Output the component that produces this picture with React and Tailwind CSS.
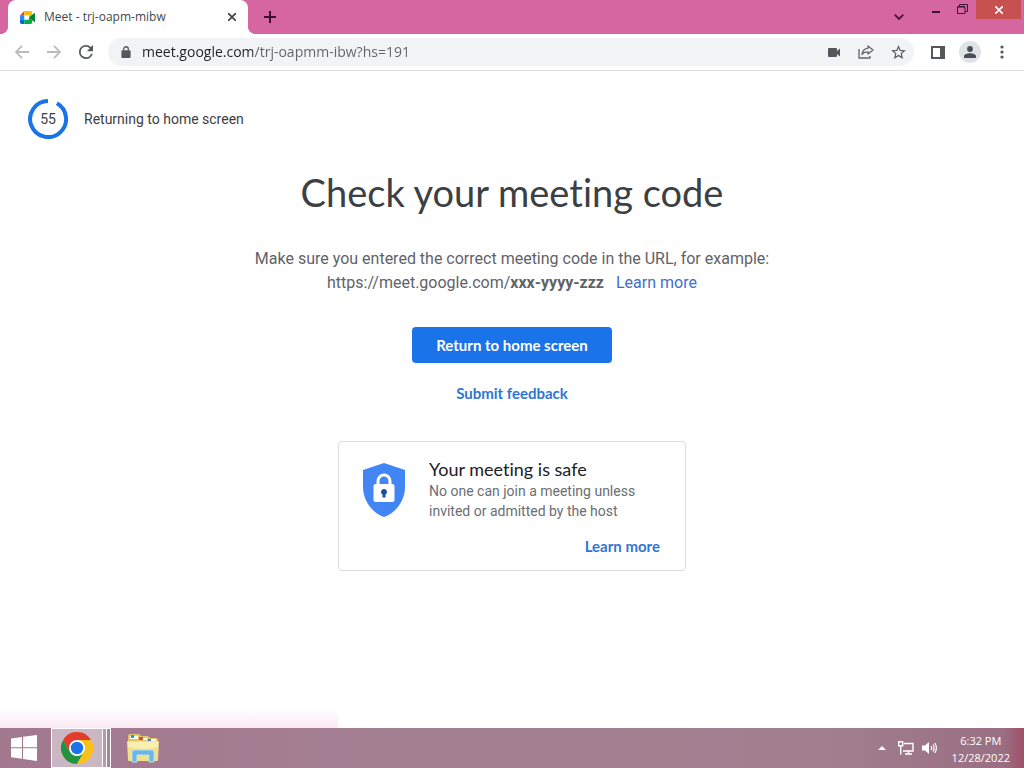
function MeetLogo() {
  return (
    <svg viewBox="0 0 16 14" className="h-[13px] w-[15px]" aria-hidden="true">
      <path d="M0 4.5 4.5 0v4.5z" fill="#ea4335" />
      <path d="M4.500 0H11.500Q13 0 13 1.500V4L9.500 7V4.500H4.500z" fill="#fbbc04" />
      <path d="M0 4.500H4.500V9.500H0z" fill="#2684fc" />
      <path d="M0 9.500H4.500V14H1.500Q0 14 0 12.500z" fill="#0066da" />
      <path d="M4.500 9.500H9.500V7L13 10V12.500Q13 14 11.500 14H4.500z" fill="#00ac47" />
      <path d="M9.500 7 15 2.300Q16 1.700 16 2.800V11.200Q16 12.300 15 11.700z" fill="#00832d" />
    </svg>
  );
}

function IconButton({ label, children, className = "" }) {
  return (
    <button type="button" aria-label={label} className={`flex h-7 w-8 shrink-0 items-center justify-center ${className}`}>
      {children}
    </button>
  );
}

function TabStrip() {
  return (
    <header className="flex h-[34px] bg-[#d5669f]">
      <span className="h-2 w-2 self-end bg-[radial-gradient(circle_at_0_0,transparent_8px,#fff_8px)]" />
      <div className="flex w-60 items-center rounded-t-lg bg-white pr-2 pl-3">
        <MeetLogo />
        <span className="ml-[9px] flex-1 font-['Open_Sans',sans-serif] text-xs text-[#45494d]">Meet - trj-oapm-mibw</span>
        <button type="button" aria-label="Close tab" className="flex h-4 w-4 items-center justify-center">
          <svg viewBox="0 0 8 8" className="h-2 w-2" stroke="#3c4043" strokeWidth="1.600"><path d="M0 0 8 8M8 0 0 8" /></svg>
        </button>
      </div>
      <span className="h-2 w-2 self-end bg-[radial-gradient(circle_at_100%_0,transparent_8px,#fff_8px)]" />
      <button type="button" aria-label="New tab" className="flex h-full w-7 items-center justify-center">
        <svg viewBox="0 0 12 12" className="h-3 w-3" stroke="#3b0f2d" strokeWidth="2"><path d="M6 0V12M0 6H12" /></svg>
      </button>
      <div className="ml-auto flex items-start">
        <button type="button" aria-label="Search tabs" className="flex h-[34px] w-7 items-center justify-center">
          <svg viewBox="0 0 10 6" className="h-[6px] w-[10px]" fill="none" stroke="#4c1038" strokeWidth="1.800"><path d="M.7.7 5 5 9.300.700" /></svg>
        </button>
        <button type="button" aria-label="Minimize" className="ml-[11px] flex h-5 w-6 items-center justify-center pt-1">
          <span className="h-[2px] w-2 bg-[#3b1230]" />
        </button>
        <button type="button" aria-label="Restore" className="flex h-[18px] w-7 items-center justify-center">
          <svg viewBox="0 0 11 10" className="h-[10px] w-[11px]" fill="none" stroke="#3b1230"><path d="M.5 3H8V9.500H.5zM.5 2.500H8" /><path d="M2.500 2V.5H10.500V7.500H8.500" /></svg>
        </button>
        <button type="button" aria-label="Close" className="mr-[3px] flex h-[19px] w-[45px] items-center justify-center bg-[#c75050]">
          <svg viewBox="0 0 8 8" className="h-2 w-2" stroke="#fff" strokeWidth="1.600"><path d="M0 0 8 8M8 0 0 8" /></svg>
        </button>
      </div>
    </header>
  );
}

function Toolbar() {
  return (
    <nav aria-label="Browser toolbar" className="flex h-[37px] items-center border-b border-[#dcdee1] bg-white pr-[6px] pl-[6px]">
      <IconButton label="Back">
        <svg viewBox="0 0 14 14" className="h-[14px] w-[14px]" fill="none" stroke="#b9bbbe" strokeWidth="1.800"><path d="M14 7H1M7 .8.900 7 7 13.200" /></svg>
      </IconButton>
      <IconButton label="Forward">
        <svg viewBox="0 0 14 14" className="h-[14px] w-[14px]" fill="none" stroke="#b9bbbe" strokeWidth="1.800"><path d="M0 7H13M7 .800 13.100 7 7 13.200" /></svg>
      </IconButton>
      <IconButton label="Reload">
        <svg viewBox="4 4 16 16" className="h-[14px] w-[14px]" fill="#54585c"><path d="M17.65 6.350A7.960 7.960 0 0 0 12 4a8 8 0 1 0 7.730 10h-2.080A6 6 0 1 1 12 6c1.660 0 3.140.690 4.220 1.780L13 11h7V4z" /></svg>
      </IconButton>
      <div className="ml-[6px] flex h-7 flex-1 items-center rounded-full bg-[#f1f3f4]">
        <svg viewBox="0 0 10 13" className="ml-[13px] h-3 w-[10px]" aria-hidden="true">
          <rect y="4.500" width="10" height="8.500" rx="1" fill="#54585c" />
          <path d="M2.500 5V3.300a2.500 2.500 0 0 1 5 0V5" fill="none" stroke="#54585c" strokeWidth="1.400" />
        </svg>
        <input
          type="text"
          aria-label="Address and search bar"
          defaultValue="meet.google.com/trj-oapmm-ibw?hs=191"
          className="ml-[11px] min-w-0 flex-1 bg-[linear-gradient(to_right,#202124_111px,#5f6368_111px)] bg-clip-text font-['Open_Sans',sans-serif] text-sm text-transparent outline-none"
        />
        <IconButton label="Camera in use">
          <svg viewBox="0 0 12 9" className="h-[9px] w-3" fill="#54585c"><path d="M1 0H8Q9 0 9 1V3L12 .5V8.500L9 6V8Q9 9 8 9H1Q0 9 0 8V1Q0 0 1 0z" /></svg>
        </IconButton>
        <IconButton label="Share this page">
          <svg viewBox="0 0 16 14" className="h-[14px] w-4" fill="none" stroke="#62666a" strokeWidth="1.300" strokeLinejoin="round"><path d="M1 4V13H12V11" /><path d="M10 1 15 5 10 9V6.800C7 6.800 5.300 7.600 4 9.500 4.500 6 6.500 3.600 10 3.200z" /></svg>
        </IconButton>
        <IconButton label="Bookmark this tab">
          <svg viewBox="2 2 20 19" className="h-[14px] w-[15px]" fill="#54585c"><path d="M22 9.240l-7.190-.620L12 2 9.190 8.630 2 9.240l5.460 4.730L5.820 21 12 17.270 18.180 21l-1.630-7.030L22 9.240zM12 15.400l-3.760 2.270 1-4.280-3.320-2.880 4.380-.380L12 6.100l1.710 4.040 4.380.380-3.320 2.880 1 4.280L12 15.400z" /></svg>
        </IconButton>
      </div>
      <IconButton label="Side panel" className="ml-2">
        <svg viewBox="0 0 14 13" className="h-[13px] w-[14px]"><path d="M1 1H13V12H1z" fill="none" stroke="#54585c" strokeWidth="2" /><path d="M9 0H14V13H9z" fill="#54585c" /></svg>
      </IconButton>
      <IconButton label="Profile">
        <span className="flex h-[22px] w-[22px] items-center justify-center rounded-full bg-[#dfe3e8]">
          <svg viewBox="0 0 12 12" className="h-3 w-3" fill="#4a4f57"><circle cx="6" cy="3" r="2.900" /><path d="M0 12V10.300C0 8.200 3.500 7.200 6 7.200s6 1 6 3.100V12z" /></svg>
        </span>
      </IconButton>
      <IconButton label="Menu">
        <svg viewBox="0 0 4 14" className="h-[14px] w-1" fill="#54585c"><circle cx="2" cy="2" r="1.600" /><circle cx="2" cy="7" r="1.600" /><circle cx="2" cy="12" r="1.600" /></svg>
      </IconButton>
    </nav>
  );
}

function Countdown() {
  return (
    <div className="flex items-center gap-4 px-7 text-sm text-[#3c4043]">
      <div className="grid h-10 w-10 place-items-center">
        <svg viewBox="0 0 40 40" className="col-start-1 row-start-1 h-10 w-10" aria-hidden="true">
          <path d="M28.900 4.300A18 18 0 1 1 20 2" fill="none" stroke="#1a73e8" strokeWidth="4" />
        </svg>
        <span className="col-start-1 row-start-1">55</span>
      </div>
      <p>Returning to home screen</p>
    </div>
  );
}

function SafetyCard() {
  return (
    <section className="mt-[30px] flex w-[348px] rounded-sm border border-[#dadce0] pt-4 pr-[25px] pb-3 pl-6">
      <svg viewBox="0 0 42 54" className="mt-[5px] h-[54px] w-[42px] shrink-0" aria-hidden="true">
        <path d="M21 0 42 7V24C42 38 32.500 50 21 54 9.500 50 0 38 0 24V7z" fill="#4285f4" />
        <path d="M15 22V18a6 6 0 0 1 12 0v4" fill="none" stroke="#fff" strokeWidth="3" />
        <rect x="10.500" y="21" width="21" height="18" rx="2" fill="#fff" />
        <path d="M21 26a3 3 0 0 1 1.500 5.600V34.500h-3V31.600A3 3 0 0 1 21 26z" fill="#174ea6" />
      </svg>
      <div className="ml-6 flex flex-1 flex-col">
        <h2 className="font-['Lato',sans-serif] text-lg leading-[23px] text-[#202124] [font-variant-ligatures:none]">Your meeting is safe</h2>
        <p className="text-sm leading-5 text-[#6a6e73]">No one can join a meeting unless invited or admitted by the host</p>
        <a href="#safety" className="mt-[13px] self-end font-['Lato',sans-serif] text-[15px] leading-6 font-bold text-[#2f76d2]">Learn more</a>
      </div>
    </section>
  );
}

function Taskbar() {
  return (
    <footer className="flex h-10 items-center bg-[linear-gradient(to_right,#a2788e,#a58093_40%,#a27f8f_80%,#9a6f83_98%,#a04f68)]">
      <button type="button" aria-label="Start" className="flex h-10 w-12 items-center justify-center">
        <svg viewBox="0 0 26 26" className="h-[26px] w-[26px]" fill="#fff"><path d="M0 3.500 11 2V12.300H0zM12 1.800 26 0V12.300H12zM0 13.300H11V23.800L0 22.300zM12 13.300H26V26L12 24z" /></svg>
      </button>
      <button type="button" aria-label="Google Chrome" className="ml-[3px] flex h-10">
        <span className="flex h-10 w-[52px] items-center justify-center border border-white bg-[#cbb6c3]">
          <svg viewBox="0 0 32 32" className="h-8 w-8">
            <circle cx="16" cy="16" r="16" fill="#fbc116" />
            <path d="M2.140 8A16 16 0 0 1 29.860 8H16L9.070 20z" fill="#e33b2e" />
            <path d="M2.140 8A16 16 0 0 0 16 32L22.930 20 16 24 9.070 20z" fill="#229342" />
            <path d="M29.860 8A16 16 0 0 1 16 32L22.930 20A8 8 0 0 0 16 8z" fill="#fbc116" />
            <circle cx="16" cy="16" r="8" fill="#fff" />
            <circle cx="16" cy="16" r="6.200" fill="#1a73e8" />
          </svg>
        </span>
        <span className="h-10 w-1 border-y border-r border-white bg-[#b899aa]" />
        <span className="h-10 w-1 border-y border-r border-white bg-[#a98598]" />
      </button>
      <button type="button" aria-label="File Explorer" className="ml-4 flex h-10 w-8 items-center justify-center">
        <svg viewBox="0 0 32 30" className="h-[30px] w-8">
          <path d="M1 3Q1 1 3 1H12L14 3H21L23 5H29Q31 5 31 7V27H1z" fill="#e3c565" />
          <path d="M3 3H11V6H3zM13 5H20V7H13zM21 6H29V9H21z" fill="#fff" />
          <path d="M4 2H7V5H4z" fill="#35a853" /><path d="M12 4H16V7H12z" fill="#de4b3e" /><path d="M21 6H24V9H21z" fill="#3b82d0" />
          <path d="M0 9Q0 8 1 8H31Q32 8 32 9L31 27Q31 28 30 28H2Q1 28 1 27z" fill="#f0e08d" />
          <path d="M1 9H31V14Q16 18 1 14z" fill="#f8efb0" />
          <path d="M5 29V19Q5 17 7 17H25Q27 17 27 19V29H22V22H10V29z" fill="#6db6e4" stroke="#b9e3f8" />
        </svg>
      </button>
      <div className="ml-auto flex items-center">
        <button type="button" aria-label="Show hidden icons" className="flex h-6 w-6 items-center justify-center">
          <svg viewBox="0 0 8 4" className="h-1 w-2" fill="#fff"><path d="M4 0 8 4H0z" /></svg>
        </button>
        <button type="button" aria-label="Network" className="flex h-6 w-6 items-center justify-center">
          <svg viewBox="0 0 16 14" className="h-[14px] w-4" fill="none" stroke="#fff" strokeWidth="1.400"><path d="M6 2.500H15V10H5M10.500 10V13M7 13H14" /><path d="M.7.7H4.700V4.700H.7zM2.700 5V13.500" /></svg>
        </button>
        <button type="button" aria-label="Volume" className="flex h-6 w-6 items-center justify-center">
          <svg viewBox="0 0 15 14" className="h-[14px] w-[15px]" fill="none" stroke="#fff" strokeWidth="1.200"><path d="M0 4.500H3L7 1V13L3 9.500H0z" fill="#fff" stroke="none" /><path d="M9 5Q10.300 7 9 9M11 3.500Q13.300 7 11 10.500M12.800 2Q16 7 12.800 12" /></svg>
        </button>
        <time dateTime="2022-12-28T18:32" className="mt-[2px] mr-[14px] ml-[10px] text-center font-['Open_Sans',sans-serif] text-[11px] leading-[17px] text-white">
          6:32 PM<br />12/28/2022
        </time>
      </div>
    </footer>
  );
}

export default function App() {
  return (
    <div className="flex min-h-screen flex-col bg-white font-['Roboto',sans-serif]">
      <TabStrip />
      <Toolbar />
      <main className="flex flex-1 flex-col pt-7">
        <Countdown />
        <div className="mt-[31px] flex flex-col items-center">
          <h1 className="font-['Lato',sans-serif] text-[38px] leading-[44px] text-[#3c4043] [font-variant-ligatures:none]">Check your meeting code</h1>
          <p className="mt-[33px] text-center text-base leading-6 text-[#5f6368]">
            Make sure you entered the correct meeting code in the URL, for example:<br />
            https://meet.google.com/<strong className="font-bold">xxx-yyyy-zzz</strong>
            <a href="#help" className="ml-3 text-[#3f6fc4]">Learn more</a>
          </p>
          <button type="button" className="mt-8 h-9 rounded-sm bg-[#1a73e8] px-6 font-['Lato',sans-serif] text-[15px] font-bold text-white">Return to home screen</button>
          <button type="button" className="mt-3 h-9 px-6 font-['Lato',sans-serif] text-[15px] font-bold text-[#2f76d2]">Submit feedback</button>
          <SafetyCard />
        </div>
        <div className="mt-auto h-5 w-[33%] bg-linear-to-b from-white to-[#fbe9f3]" />
      </main>
      <Taskbar />
    </div>
  );
}
